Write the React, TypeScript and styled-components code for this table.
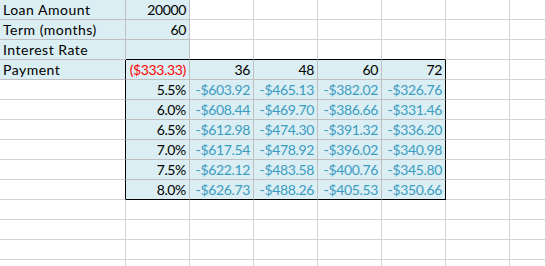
import React from "react";
import styled, { createGlobalStyle } from "styled-components";

const GlobalStyle = createGlobalStyle`
  html, body {
    margin: 0;
    padding: 0;
    background: #ffffff;
    overflow: hidden;
  }
  body {
    font-family: Lato, "Liberation Sans", sans-serif;
  }
`;

const Sheet = styled.div`
  display: grid;
  grid-template-columns: 126px repeat(6, 64px) 1fr;
  grid-auto-rows: 20px;
  width: 546px;
  height: 266px;
  overflow: hidden;
`;

type Tone = "plain" | "red" | "blue";

type CellProps = {
  $fill?: boolean;
  $tone?: Tone;
  $numeric?: boolean;
  $right: string;
  $bottom: string;
};

const tones = {
  plain: "#000000",
  red: "#ff0000",
  blue: "#3a9cc1",
};

// labels sit left, numbers sit right and are set a little tighter (Calibri figures are narrow)
const Cell = styled.div<CellProps>`
  box-sizing: border-box;
  padding: 0 3px;
  font-size: 14px;
  line-height: 19px;
  white-space: nowrap;
  overflow: hidden;
  background: ${(p) => (p.$fill ? "#daeef3" : "#ffffff")};
  color: ${(p) => tones[p.$tone || "plain"]};
  text-align: ${(p) => (p.$numeric ? "right" : "left")};
  letter-spacing: ${(p) => (p.$numeric ? "-0.35px" : "0.5px")};
  border-right: 1px solid ${(p) => p.$right};
  border-bottom: 1px solid ${(p) => p.$bottom};
`;

const GRID = "#d4d4d4";
const INNER = "#bfbfbf";
const EDGE = "#000000";

type Entry = { text: string; tone?: Tone; numeric?: boolean };

const rates = ["5.5%", "6.0%", "6.5%", "7.0%", "7.5%", "8.0%"];
const payments = [
  ["-$603.92", "-$465.13", "-$382.02", "-$326.76"],
  ["-$608.44", "-$469.70", "-$386.66", "-$331.46"],
  ["-$612.98", "-$474.30", "-$391.32", "-$336.20"],
  ["-$617.54", "-$478.92", "-$396.02", "-$340.98"],
  ["-$622.12", "-$483.58", "-$400.76", "-$345.80"],
  ["-$626.73", "-$488.26", "-$405.53", "-$350.66"],
];

const COLS = 8;
const ROWS = 14;

function contentAt(r: number, c: number): Entry | null {
  if (c === 0 && r < 4) {
    return { text: ["Loan Amount", "Term (months)", "Interest Rate", "Payment"][r] };
  }
  if (c === 1 && r === 0) return { text: "20000", numeric: true };
  if (c === 1 && r === 1) return { text: "60", numeric: true };
  if (c === 1 && r === 3) return { text: "($333.33)", tone: "red", numeric: true };
  if (r === 3 && c >= 2 && c <= 5) return { text: String(36 + (c - 2) * 12), numeric: true };
  if (r >= 4 && r <= 9 && c === 1) return { text: rates[r - 4], numeric: true };
  if (r >= 4 && r <= 9 && c >= 2 && c <= 5) {
    return { text: payments[r - 4][c - 2], tone: "blue", numeric: true };
  }
  return null;
}

// blue-filled cells: the inputs block and the data table
function isFilled(r: number, c: number) {
  if (c === 0 && r <= 3) return true;
  if (c === 1 && r <= 2) return true;
  return r >= 3 && r <= 9 && c >= 1 && c <= 5;
}

function rightColor(r: number, c: number) {
  if (r >= 3 && r <= 9 && (c === 0 || c === 5)) return EDGE;
  if (isFilled(r, c)) return INNER;
  return GRID;
}

function bottomColor(r: number, c: number) {
  if ((r === 2 || r === 9) && c >= 1 && c <= 5) return EDGE;
  if (isFilled(r, c)) return INNER;
  return GRID;
}

export default function App() {
  const cells = [];
  for (let r = 0; r < ROWS; r++) {
    for (let c = 0; c < COLS; c++) {
      const entry = contentAt(r, c);
      cells.push(
        <Cell
          key={`${r}-${c}`}
          $fill={isFilled(r, c)}
          $tone={entry?.tone}
          $numeric={entry?.numeric}
          $right={rightColor(r, c)}
          $bottom={bottomColor(r, c)}
        >
          {entry ? entry.text : ""}
        </Cell>
      );
    }
  }
  return (
    <>
      <GlobalStyle />
      <Sheet>{cells}</Sheet>
    </>
  );
}
